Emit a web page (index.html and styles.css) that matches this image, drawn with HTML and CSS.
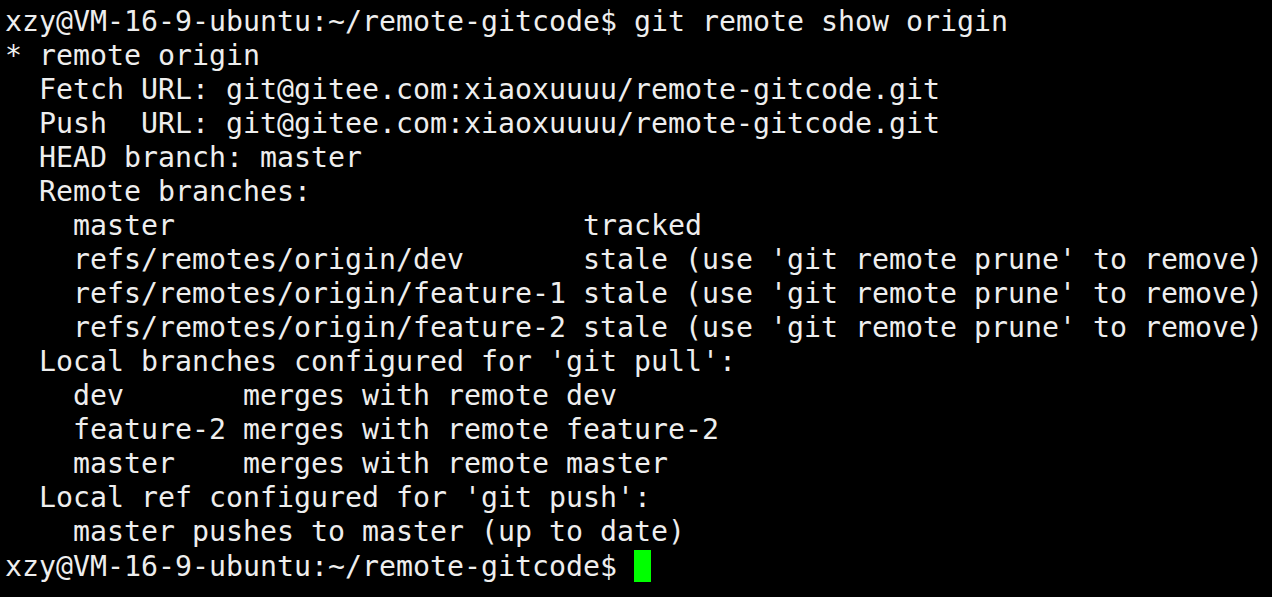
FILE: index.html
```html
<!DOCTYPE html>
<html>
<head>
<meta charset="utf-8">
<link rel="stylesheet" href="styles.css">
</head>
<body>
<pre class="term">xzy@VM-16-9-ubuntu:~/remote-gitcode$ git remote show origin
* remote origin
  Fetch URL: git@gitee.com:xiaoxuuuu/remote-gitcode.git
  Push  URL: git@gitee.com:xiaoxuuuu/remote-gitcode.git
  HEAD branch: master
  Remote branches:
    master                        tracked
    refs/remotes/origin/dev       stale (use 'git remote prune' to remove)
    refs/remotes/origin/feature-1 stale (use 'git remote prune' to remove)
    refs/remotes/origin/feature-2 stale (use 'git remote prune' to remove)
  Local branches configured for 'git pull':
    dev       merges with remote dev
    feature-2 merges with remote feature-2
    master    merges with remote master
  Local ref configured for 'git push':
    master pushes to master (up to date)
xzy@VM-16-9-ubuntu:~/remote-gitcode$ <span class="cursor"></span></pre>
</body>
</html>
```
FILE: styles.css
```css
html, body {
  margin: 0;
  padding: 0;
  background: #000000;
  width: 1272px;
  height: 597px;
  overflow: hidden;
}
.term {
  margin: 0;
  padding: 4.5px 0 0 5px;
  font-family: "DejaVu Sans Mono", monospace;
  font-size: 28.24px;
  line-height: 34.06px;
  color: #eeeeee;
  white-space: pre;
}
.cursor {
  display: inline-block;
  width: 17px;
  height: 32px;
  background: #00ff00;
  vertical-align: top;
}
```
